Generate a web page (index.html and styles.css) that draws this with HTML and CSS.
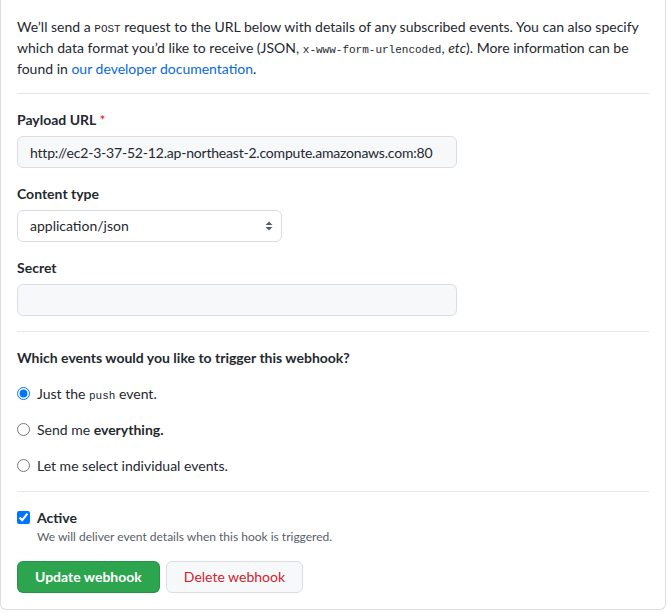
FILE: index.html
```html
<!DOCTYPE html>
<html lang="en">
<head>
<meta charset="utf-8">
<title>Webhook settings</title>
<link rel="stylesheet" href="styles.css">
</head>
<body>
<form class="box">
  <p class="intro">We’ll send a <code>POST</code> request to the URL below with details of any subscribed events. You can also specify which data format you’d like to receive (JSON, <code>x-www-form-urlencoded</code>, <em>etc</em>). More information can be found in <a href="#">our developer documentation</a>.</p>
  <hr class="divider divider-first">

  <div class="group">
    <label class="label" for="url">Payload URL <span class="req">*</span></label>
    <input class="field field-wide field-url" id="url" type="text" value="http://ec2-3-37-52-12.ap-northeast-2.compute.amazonaws.com:80">
  </div>

  <div class="group">
    <label class="label" for="ctype">Content type</label>
    <span class="select-wrap">
      <select class="field select" id="ctype">
        <option>application/json</option>
        <option>application/x-www-form-urlencoded</option>
      </select>
      <svg class="select-arrow" width="8" height="10" viewBox="0 0 8 10" aria-hidden="true"><path d="M4 0.5 L7.5 4 H0.5 Z M4 9.5 L0.5 6 H7.5 Z" fill="#57606a"/></svg>
    </span>
  </div>

  <div class="group">
    <label class="label" for="secret">Secret</label>
    <input class="field field-wide" id="secret" type="password" value="">
  </div>

  <hr class="divider">

  <div class="group">
    <div class="label">Which events would you like to trigger this webhook?</div>
    <label class="check"><input type="radio" name="ev" checked> <span>Just the <code>push</code> event.</span></label>
    <label class="check"><input type="radio" name="ev"> <span>Send me <strong>everything.</strong></span></label>
    <label class="check"><input type="radio" name="ev"> <span>Let me select individual events.</span></label>
  </div>

  <hr class="divider">

  <div class="active">
    <label class="check check-tight"><input type="checkbox" checked> <strong>Active</strong></label>
    <p class="note">We will deliver event details when this hook is triggered.</p>
  </div>

  <div class="actions">
    <button type="button" class="btn btn-primary">Update webhook</button>
    <button type="button" class="btn btn-danger">Delete webhook</button>
  </div>
</form>
</body>
</html>
```

FILE: styles.css
```css
html, body {
  margin: 0;
  padding: 0;
  background: #ffffff;
}

body {
  font-family: Lato, "Liberation Sans", Arial, sans-serif;
  font-size: 14px;
  line-height: 21px;
  color: #24292f;
}

.box {
  width: 666px;
  box-sizing: border-box;
  border: 1px solid #d8dee4;
  border-top: 0;
  border-radius: 0 0 6px 6px;
  padding: 16px 16px 16px;
}

.intro {
  margin: 0;
}

code {
  font-family: "Liberation Mono", "DejaVu Sans Mono", monospace;
  font-size: 11px;
  line-height: 1;
}

a {
  color: #0969da;
  text-decoration: none;
}

.divider {
  border: 0;
  height: 1px;
  margin: 15px 0;
  background: #e4e8eb;
}

.divider-first {
  margin-top: 14px;
}

.group {
  margin: 15px 0;
}

.label {
  display: block;
  font-weight: 700;
  margin-bottom: 6px;
}

.req {
  color: #cf222e;
  font-weight: 400;
}

.field {
  display: block;
  box-sizing: border-box;
  height: 32px;
  padding: 5px 12px;
  font-family: inherit;
  font-size: 14px;
  line-height: 20px;
  color: #24292f;
  border: 1px solid #d8dee4;
  border-radius: 6px;
  background: #f6f8fa;
  outline: none;
}

.field-wide {
  width: 440px;
}

.field-url {
  letter-spacing: -0.2px;
}

.select-wrap {
  position: relative;
  display: inline-block;
}

.select {
  width: 265px;
  background: #ffffff;
  appearance: none;
  -webkit-appearance: none;
}

.select-arrow {
  position: absolute;
  right: 9px;
  top: 11px;
}

.check {
  display: flex;
  align-items: center;
  gap: 7px;
  margin-top: 15px;
  height: 21px;
}

.check input {
  margin: 0;
  width: 13px;
  height: 13px;
}

.check strong {
  font-weight: 700;
}

.check-tight {
  margin-top: 0;
}

.active {
  margin: 15px 0;
}

.note {
  margin: 0 0 0 20px;
  font-size: 12px;
  line-height: 18px;
  color: #57606a;
}

.actions {
  display: flex;
  gap: 6px;
}

.btn {
  box-sizing: border-box;
  height: 32px;
  padding: 5px 17px;
  font-family: inherit;
  font-size: 14px;
  line-height: 20px;
  border-radius: 6px;
  cursor: pointer;
}

.btn-primary {
  color: #ffffff;
  font-weight: 700;
  background: #2da44e;
  border: 1px solid rgba(27, 31, 36, 0.15);
}

.btn-danger {
  color: #cf222e;
  font-weight: 400;
  background: #f6f8fa;
  border: 1px solid #d8dee4;
}
```
